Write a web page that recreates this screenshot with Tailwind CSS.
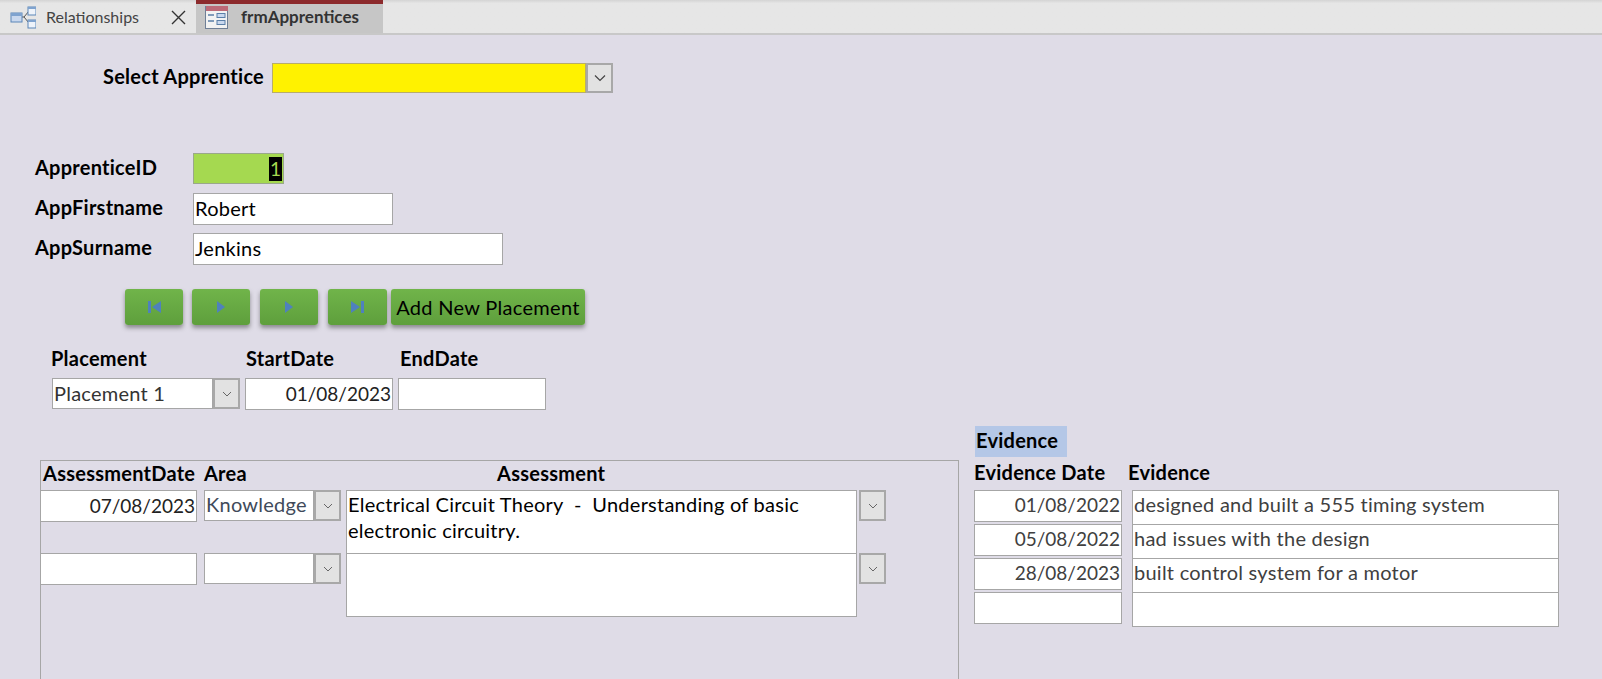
<!DOCTYPE html>
<html lang="en">
<head>
  <meta charset="utf-8" />
  <meta name="viewport" content="width=device-width, initial-scale=1" />
  <title>frmApprentices</title>
  <script src="https://cdn.jsdelivr.net/npm/@tailwindcss/browser@4"></script>
</head>
<body class="h-[679px] overflow-hidden bg-[#dfdce7] font-['Lato',sans-serif] text-[20px] leading-[24px] tracking-[0.25px] text-black">
  <!-- tab strip -->
  <header class="flex h-[35px] border-b-2 border-[#c8c8c8] bg-[#e6e6e6] bg-gradient-to-b from-[#d4d4d4] from-0% to-[#e6e6e6] to-10%">
    <div class="ml-[2px] flex w-[194px] items-center pt-[1px]">
      <svg class="ml-[8px] h-[24px] w-[26px]" viewBox="0 0 26 24">
        <path d="M11 12h3M14 12l5-6M14 12l5 6" fill="none" stroke="#555" stroke-width="1" />
        <rect x="1" y="8" width="11" height="9" fill="#c9d8ee" stroke="#5b86b8" />
        <rect x="1" y="8" width="11" height="3" fill="#7fa3cf" />
        <rect x="18" y="2" width="8" height="8" fill="#eef3fa" stroke="#5b86b8" />
        <rect x="18" y="2" width="8" height="2" fill="#7fa3cf" />
        <rect x="18" y="15" width="8" height="8" fill="#eef3fa" stroke="#5b86b8" />
        <rect x="18" y="15" width="8" height="2" fill="#7fa3cf" />
      </svg>
      <span class="ml-[10px] w-[107px] text-[16px] tracking-normal text-[#444]">Relationships</span>
      <svg class="ml-[18px] h-[15px] w-[15px]" viewBox="0 0 15 15">
        <path d="M1 1l13 13M14 1L1 14" stroke="#333" stroke-width="1.4" />
      </svg>
    </div>
    <div class="relative flex w-[187px] items-center bg-[#c6c6c6] pt-[1px]">
      <div class="absolute inset-x-0 top-0 h-[4px] bg-[#8c2a2c]"></div>
      <svg class="ml-[9px] h-[24px] w-[24px]" viewBox="0 0 24 24">
        <rect x="0.5" y="1.5" width="22" height="22" fill="#f2f2f2" stroke="#6f7f96" />
        <rect x="1" y="1" width="22" height="5" fill="#bd6a78" />
        <path d="M3 10h6M3 16h6" stroke="#5b7fa8" stroke-width="1.5" />
        <rect x="12" y="8.5" width="8" height="4" fill="#c9d8ee" stroke="#5b7fa8" />
        <rect x="12" y="15.5" width="8" height="4" fill="#c9d8ee" stroke="#5b7fa8" />
      </svg>
      <span class="ml-[12px] text-[17px] font-bold tracking-normal text-[#333]">frmApprentices</span>
    </div>
  </header>

  <!-- apprentice picker -->
  <section class="ml-[103px] mt-[27px] flex h-[31px] items-center">
    <label class="w-[169px] pb-[4px] font-bold">Select Apprentice</label>
    <div class="h-[30px] w-[314px] border border-[#b8ad6a] bg-[#fff200]"></div>
    <div class="flex h-[30px] w-[27px] items-center justify-center border-2 border-[#a8a8a8] bg-[#e2e2e2]">
      <svg class="h-[8px] w-[12px]" viewBox="0 0 12 8"><path d="M1 1.5l5 5 5-5" fill="none" stroke="#444" stroke-width="1.2" /></svg>
    </div>
  </section>

  <!-- apprentice details -->
  <section class="ml-[35px] mt-[60px] flex flex-col">
    <div class="flex h-[31px] items-center">
      <label class="w-[158px] pb-[4px] font-bold">ApprenticeID</label>
      <div class="flex h-[31px] w-[91px] items-center justify-end border border-[#9aa88a] bg-[#a5d950] pr-[1px]">
        <span class="bg-black px-[1px] text-[19px] tracking-normal text-[#a5d950]">1</span>
      </div>
    </div>
    <div class="mt-[9px] flex h-[32px] items-center">
      <label class="w-[158px] pb-[4px] font-bold">AppFirstname</label>
      <div class="h-[32px] w-[200px] border border-[#a6a6a6] bg-white px-[1px] leading-[28px]">Robert</div>
    </div>
    <div class="mt-[8px] flex h-[32px] items-center">
      <label class="w-[158px] pb-[4px] font-bold">AppSurname</label>
      <div class="h-[32px] w-[310px] border border-[#a6a6a6] bg-white px-[1px] leading-[28px]">Jenkins</div>
    </div>
  </section>

  <!-- record navigation -->
  <nav class="ml-[125px] mt-[24px] flex h-[36px]">
    <button class="flex w-[58px] items-center justify-center rounded-[3px] bg-gradient-to-b from-[#70b44a] to-[#5e9f3c] shadow-[0_3px_4px_rgba(60,60,60,0.5)]">
      <svg class="h-[12px] w-[13px]" viewBox="0 0 13 12" fill="#4f81bd"><path d="M0 0h3v12H0zM13 0v12L4 6z" /></svg>
    </button>
    <button class="ml-[9px] flex w-[58px] items-center justify-center rounded-[3px] bg-gradient-to-b from-[#70b44a] to-[#5e9f3c] shadow-[0_3px_4px_rgba(60,60,60,0.5)]">
      <svg class="h-[12px] w-[8px]" viewBox="0 0 8 12" fill="#4f81bd"><path d="M0 0v12l8-6z" /></svg>
    </button>
    <button class="ml-[10px] flex w-[58px] items-center justify-center rounded-[3px] bg-gradient-to-b from-[#70b44a] to-[#5e9f3c] shadow-[0_3px_4px_rgba(60,60,60,0.5)]">
      <svg class="h-[12px] w-[8px]" viewBox="0 0 8 12" fill="#4f81bd"><path d="M0 0v12l8-6z" /></svg>
    </button>
    <button class="ml-[10px] flex w-[59px] items-center justify-center rounded-[3px] bg-gradient-to-b from-[#70b44a] to-[#5e9f3c] shadow-[0_3px_4px_rgba(60,60,60,0.5)]">
      <svg class="h-[12px] w-[13px]" viewBox="0 0 13 12" fill="#4f81bd"><path d="M0 0v12l9-6zM10 0h3v12h-3z" /></svg>
    </button>
    <button class="ml-[4px] w-[194px] rounded-[3px] bg-gradient-to-b from-[#70b44a] to-[#5e9f3c] text-center tracking-[0.3px] shadow-[0_3px_4px_rgba(60,60,60,0.5)]">Add New Placement</button>
  </nav>

  <!-- placement -->
  <section class="ml-[51px] mt-[22px]">
    <div class="flex h-[22px] items-center font-bold">
      <label class="w-[195px]">Placement</label>
      <label class="w-[154px]">StartDate</label>
      <label>EndDate</label>
    </div>
    <div class="mt-[9px] flex">
      <div class="ml-[1px] h-[31px] w-[161px] border border-[#a6a6a6] bg-white px-[1px] leading-[29px] text-[#333]">Placement 1</div>
      <div class="flex h-[31px] w-[27px] items-center justify-center border-2 border-[#a8a8a8] bg-[#e2e2e2]">
        <svg class="h-[6px] w-[10px]" viewBox="0 0 10 6"><path d="M1 1l4 4 4-4" fill="none" stroke="#666" /></svg>
      </div>
      <div class="ml-[5px] h-[32px] w-[148px] border border-[#a6a6a6] bg-white pr-[1px] text-right text-[19px] leading-[30px] tracking-normal text-[#222]">01/08/2023</div>
      <div class="ml-[5px] h-[32px] w-[148px] border border-[#a6a6a6] bg-white"></div>
    </div>
  </section>

  <div class="mt-[16px] flex items-start">
    <!-- assessments subform -->
    <section class="ml-[40px] mt-[34px] h-[220px] w-[919px] border-x border-t border-[#a6a6a6]">
      <div class="flex h-[29px] items-center pb-[5px] font-bold">
        <span class="ml-[2px] w-[161px]">AssessmentDate</span>
        <span class="w-[293px]">Area</span>
        <span>Assessment</span>
      </div>
      <div class="flex h-[63px] items-start">
        <div class="-ml-px h-[32px] w-[157px] border border-[#a6a6a6] bg-white pr-[1px] text-right text-[19px] leading-[30px] tracking-normal text-[#222]">07/08/2023</div>
        <div class="ml-[7px] h-[31px] w-[110px] border border-[#a6a6a6] bg-white px-[1px] leading-[27px] text-[#404a5a]">Knowledge</div>
        <div class="flex h-[31px] w-[27px] items-center justify-center border-2 border-[#a8a8a8] bg-[#e2e2e2]">
          <svg class="h-[6px] w-[10px]" viewBox="0 0 10 6"><path d="M1 1l4 4 4-4" fill="none" stroke="#666" /></svg>
        </div>
        <div class="ml-[5px] h-[64px] w-[511px] border border-[#a6a6a6] bg-white px-[1px] leading-[26px]">Electrical Circuit Theory &nbsp;-&nbsp; Understanding of basic electronic circuitry.</div>
        <div class="ml-[2px] flex h-[31px] w-[27px] items-center justify-center border-2 border-[#a8a8a8] bg-[#e2e2e2]">
          <svg class="h-[6px] w-[10px]" viewBox="0 0 10 6"><path d="M1 1l4 4 4-4" fill="none" stroke="#666" /></svg>
        </div>
      </div>
      <div class="flex h-[63px] items-start">
        <div class="-ml-px h-[32px] w-[157px] border border-[#a6a6a6] bg-white"></div>
        <div class="ml-[7px] h-[31px] w-[110px] border border-[#a6a6a6] bg-white"></div>
        <div class="flex h-[31px] w-[27px] items-center justify-center border-2 border-[#a8a8a8] bg-[#e2e2e2]">
          <svg class="h-[6px] w-[10px]" viewBox="0 0 10 6"><path d="M1 1l4 4 4-4" fill="none" stroke="#666" /></svg>
        </div>
        <div class="ml-[5px] h-[64px] w-[511px] border border-[#a6a6a6] bg-white"></div>
        <div class="ml-[2px] flex h-[31px] w-[27px] items-center justify-center border-2 border-[#a8a8a8] bg-[#e2e2e2]">
          <svg class="h-[6px] w-[10px]" viewBox="0 0 10 6"><path d="M1 1l4 4 4-4" fill="none" stroke="#666" /></svg>
        </div>
      </div>
    </section>

    <!-- evidence subform -->
    <section class="ml-[15px] w-[585px]">
      <div class="ml-px h-[31px] w-[92px] bg-[#b4c7e7] px-[1px] font-bold leading-[28px]">Evidence</div>
      <div class="mt-[3px] flex h-[25px] items-center pb-[1px] font-bold">
        <span class="w-[154px]">Evidence Date</span>
        <span>Evidence</span>
      </div>
      <div class="mt-[5px] flex">
        <div class="flex w-[148px] flex-col gap-[2px]">
          <div class="h-[32px] border border-[#a6a6a6] bg-white pr-[1px] text-right text-[19px] leading-[28px] tracking-normal text-[#404040]">01/08/2022</div>
          <div class="h-[32px] border border-[#a6a6a6] bg-white pr-[1px] text-right text-[19px] leading-[28px] tracking-normal text-[#404040]">05/08/2022</div>
          <div class="h-[32px] border border-[#a6a6a6] bg-white pr-[1px] text-right text-[19px] leading-[28px] tracking-normal text-[#404040]">28/08/2023</div>
          <div class="h-[32px] border border-[#a6a6a6] bg-white"></div>
        </div>
        <div class="ml-[10px] flex w-[427px] flex-col">
          <div class="h-[35px] border border-[#a6a6a6] bg-white px-[1px] leading-[26px] text-[#404040]">designed and built a 555 timing system</div>
          <div class="-mt-px h-[35px] border border-[#a6a6a6] bg-white px-[1px] leading-[26px] text-[#404040]">had issues with the design</div>
          <div class="-mt-px h-[35px] border border-[#a6a6a6] bg-white px-[1px] leading-[26px] text-[#404040]">built control system for a motor</div>
          <div class="-mt-px h-[35px] border border-[#a6a6a6] bg-white"></div>
        </div>
      </div>
    </section>
  </div>
</body>
</html>
